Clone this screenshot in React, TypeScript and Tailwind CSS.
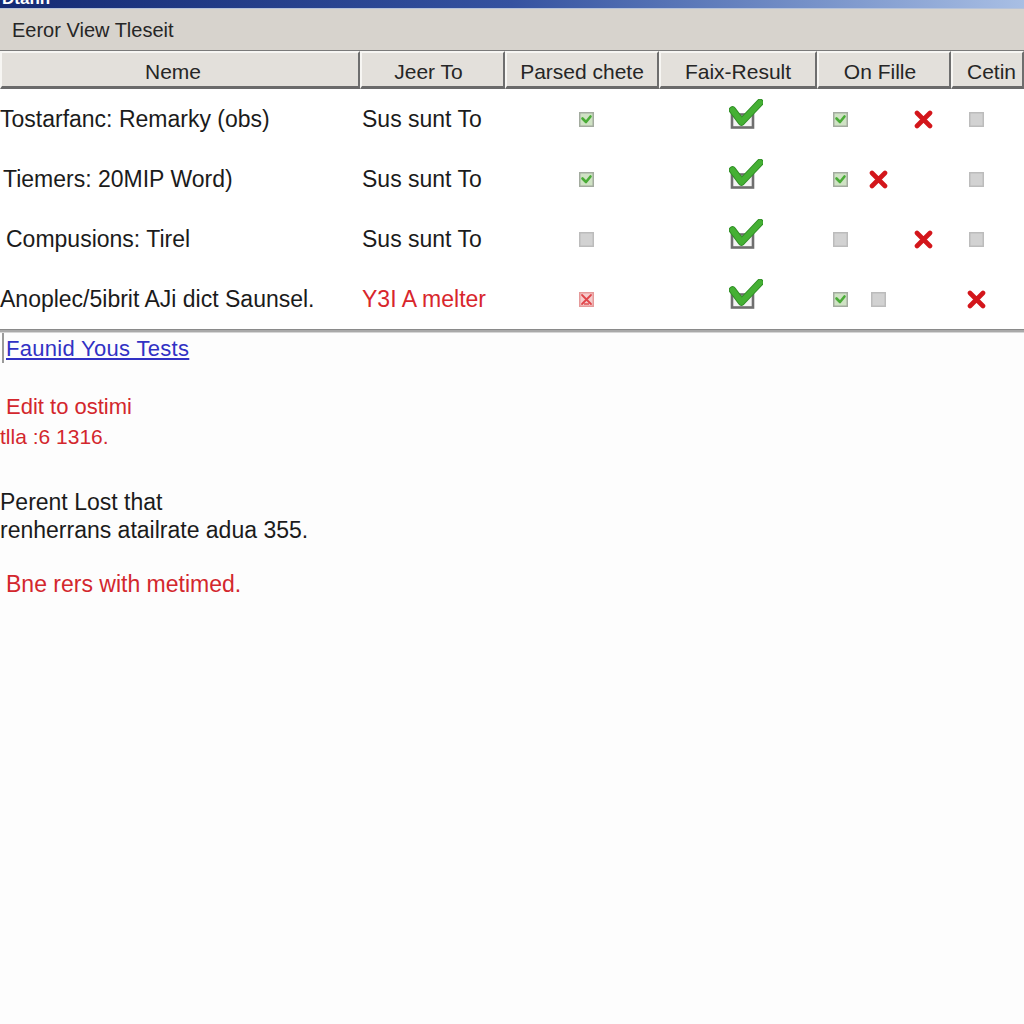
import React from 'react';

type Mark = 'check' | 'gray' | 'x' | 'xbox' | null;

const SmallCheck = () => (
    <svg width="15" height="15" viewBox="0 0 15 15">
        <rect x="0.75" y="0.75" width="13.5" height="13.5" fill="#cfe2c4" stroke="#a3ab9f" strokeWidth="1.5" />
        <path d="M3.5 6.5 L7 10 L11.5 4.5" fill="none" stroke="#4aac37" strokeWidth="2.6" strokeLinecap="round" strokeLinejoin="round" />
    </svg>
);

const GrayBox = () => (
    <svg width="15" height="15" viewBox="0 0 15 15">
        <rect x="0.75" y="0.75" width="13.5" height="13.5" fill="#d2d2d2" stroke="#bcbcbc" strokeWidth="1.5" />
    </svg>
);

const RedX = () => (
    <svg width="19" height="19" viewBox="0 0 19 19">
        <path d="M3 3 L16 16 M16 3 L3 16" stroke="#d3161b" strokeWidth="4.6" strokeLinecap="round" />
    </svg>
);

const RedXBox = () => (
    <svg width="15" height="15" viewBox="0 0 15 15">
        <rect x="0.75" y="0.75" width="13.5" height="13.5" fill="#f6cccc" stroke="#e59a9a" strokeWidth="1.5" />
        <path d="M3 3 L12 12 M12 3 L3 12" stroke="#e0454a" strokeWidth="1.8" strokeLinecap="round" />
        <path d="M5 12 L10 12" stroke="#e0454a" strokeWidth="1.4" />
    </svg>
);

const BigCheck = () => (
    <svg width="34" height="32" viewBox="0 0 34 32" className="mb-[8px]">
        <rect x="3" y="15.5" width="21" height="13" fill="#f4f4f4" stroke="#6f6f6f" strokeWidth="2.6" />
        <path d="M3.5 11 L12.5 23 L31 3.5" fill="none" stroke="#2f8e25" strokeWidth="7.5" strokeLinecap="round" strokeLinejoin="round" />
        <path d="M3.5 11 L12.5 23 L31 3.5" fill="none" stroke="#45b034" strokeWidth="5.5" strokeLinecap="round" strokeLinejoin="round" />
    </svg>
);

const Icon = ({ m }: { m: Mark }) => {
    if (m === 'check') return <SmallCheck />;
    if (m === 'gray') return <GrayBox />;
    if (m === 'x') return <RedX />;
    if (m === 'xbox') return <RedXBox />;
    return null;
};

const Slot = ({ m, ml }: { m: Mark; ml: string }) => (
    <div className={`w-[20px] flex items-center justify-center ${ml}`}>
        <Icon m={m} />
    </div>
);

const rows: {
    name: string;
    pad: string;
    jeer: string;
    red?: boolean;
    parsed: Mark;
    file: [Mark, Mark, Mark];
    cetin: Mark;
}[] = [
    { name: 'Tostarfanc: Remarky (obs)', pad: 'pl-0', jeer: 'Sus sunt To', parsed: 'check', file: ['check', null, 'x'], cetin: 'gray' },
    { name: 'Tiemers: 20MIP Word)', pad: 'pl-[3px]', jeer: 'Sus sunt To', parsed: 'check', file: ['check', 'x', null], cetin: 'gray' },
    { name: 'Compusions: Tirel', pad: 'pl-[6px]', jeer: 'Sus sunt To', parsed: 'gray', file: ['gray', null, 'x'], cetin: 'gray' },
    { name: 'Anoplec/5ibrit AJi dict Saunsel.', pad: 'pl-0', jeer: 'Y3I A melter', red: true, parsed: 'xbox', file: ['check', 'gray', null], cetin: 'x' },
];

const headers = [
    { label: 'Neme', w: 'w-[360px]', extra: 'justify-center pr-[14px]' },
    { label: 'Jeer To', w: 'w-[145px]', extra: 'justify-center pr-[8px]' },
    { label: 'Parsed chete', w: 'w-[154px]', extra: 'justify-center' },
    { label: 'Faix-Result', w: 'w-[158px]', extra: 'justify-center' },
    { label: 'On Fille', w: 'w-[134px]', extra: 'justify-center pr-[8px]' },
    { label: 'Cetin', w: 'flex-1', extra: 'justify-start pl-[14px]' },
];

export default function App() {
    return (
        <div
            className="w-[1024px] h-[1024px] bg-[#fdfdfd] overflow-hidden text-[#1b1b1b]"
            style={{ fontFamily: '"Liberation Sans", Arial, sans-serif' }}
        >
            {/* title bar */}
            <div className="h-[9px] overflow-hidden bg-gradient-to-r from-[#142a74] via-[#3552a0] to-[#a9bfe4] border-b border-[#b7c3d9]">
                <div className="-mt-[11px] pl-[2px] text-[17px] font-bold text-white leading-[20px]">Dtann</div>
            </div>

            {/* menu bar */}
            <div className="h-[41px] bg-[#d7d3cd] flex items-center pl-[12px] text-[20px] text-[#262626]">
                Eeror View Tleseit
            </div>

            {/* header */}
            <div className="h-[39px] flex bg-[#5a5a5a] border-t border-[#7a7a7a]">
                {headers.map((h) => (
                    <div
                        key={h.label}
                        className={`${h.w} ${h.extra} flex items-center pt-[4px] bg-[#e3e0db] border-t-2 border-l-2 border-[#f7f6f3] border-r-2 border-r-[#6e6e6e] border-b-[3px] border-b-[#6a6a6a] text-[21px] text-[#262626]`}
                    >
                        {h.label}
                    </div>
                ))}
            </div>

            {/* rows */}
            <div className="bg-white">
                {rows.map((r, i) => (
                    <div key={i} className="h-[60px] flex items-center text-[23px]">
                        <div className={`w-[360px] ${r.pad} whitespace-nowrap`}>{r.name}</div>
                        <div className={`w-[145px] pl-[2px] whitespace-nowrap ${r.red ? 'text-[#d8262c]' : ''}`}>{r.jeer}</div>
                        <div className="w-[154px] flex items-center pl-[74px]">
                            <Icon m={r.parsed} />
                        </div>
                        <div className="w-[158px] flex items-center pl-[70px]">
                            <BigCheck />
                        </div>
                        <div className="w-[134px] flex items-center">
                            <Slot m={r.file[0]} ml="ml-[13px]" />
                            <Slot m={r.file[1]} ml="ml-[18px]" />
                            <Slot m={r.file[2]} ml="ml-[25px]" />
                        </div>
                        <div className="flex-1 flex items-center">
                            <Slot m={r.cetin} ml="ml-[15px]" />
                        </div>
                    </div>
                ))}
            </div>

            {/* table bottom edge */}
            <div className="h-[4px] bg-[#a9a9a9] border-t border-[#8a8a8a] border-b border-b-[#d6d6d6]" />

            {/* found tests box */}
            <div className="ml-[2px] h-[30px] border-l-2 border-[#9a9a9a] flex items-center pl-[2px]">
                <span className="text-[22px] tracking-[0.3px] text-[#3131c4] underline underline-offset-2">Faunid Yous Tests</span>
            </div>

            <div className="mt-[29px] text-[22px] text-[#d3272d] leading-[30px]">
                <div className="pl-[6px]">Edit to ostimi</div>
                <div className="text-[21px]">tlla :6 1316.</div>
            </div>

            <div className="mt-[36px] text-[23px] text-[#1b1b1b] leading-[28px]">
                <div>Perent Lost that</div>
                <div>renherrans atailrate adua 355.</div>
            </div>

            <div className="mt-[26px] pl-[6px] text-[23px] text-[#d3272d] leading-[28px]">
                Bne rers with metimed.
            </div>
        </div>
    );
}
